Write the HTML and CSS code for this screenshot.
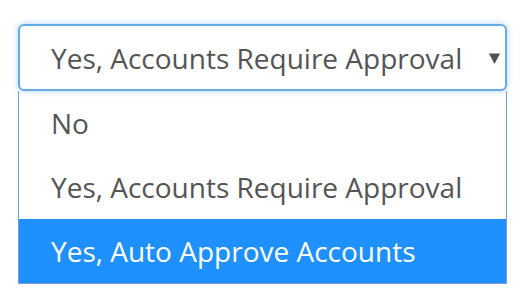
FILE: index.html
```html
<!DOCTYPE html>
<html>
<head>
<meta charset="utf-8">
<link rel="stylesheet" href="styles.css">
</head>
<body>
<div class="wrap">
  <div class="select">
    <span class="value">Yes, Accounts Require Approval</span>
    <svg class="arrow" width="11" height="11" viewBox="0 0 11 11"><polygon points="0,0.5 11,0.5 5.5,11" fill="#505050"/></svg>
  </div>
  <ul class="list">
    <li class="opt">No</li>
    <li class="opt">Yes, Accounts Require Approval</li>
    <li class="opt selected">Yes, Auto Approve Accounts</li>
  </ul>
</div>
</body>
</html>
```
FILE: styles.css
```css
html, body {
  margin: 0;
  padding: 0;
  background: #fff;
}
body {
  font-family: "Open Sans", "Noto Sans", sans-serif;
  font-size: 28px;
  color: #555;
}
.wrap {
  padding: 24px 18px 0 18px;
  width: 489px;
}
.select {
  box-sizing: border-box;
  height: 67px;
  border: 2px solid #66aae6;
  border-radius: 6px;
  box-shadow: 0 0 6px rgba(102, 175, 233, 0.55);
  display: flex;
  align-items: center;
  justify-content: space-between;
  padding: 0 5px 0 31px;
  background: #fff;
}
.value {
  line-height: 1;
}
.arrow {
  display: block;
  margin-top: 2px;
}
.list {
  list-style: none;
  margin: 0;
  padding: 0;
  box-sizing: border-box;
  border: 1px solid #7c9bd4;
  border-top: none;
  width: 489px;
}
.opt {
  height: 64px;
  display: flex;
  align-items: center;
  padding-left: 32px;
  box-sizing: border-box;
  line-height: 1;
}
.opt.selected {
  background: #1e90ff;
  color: #fff;
}
```
